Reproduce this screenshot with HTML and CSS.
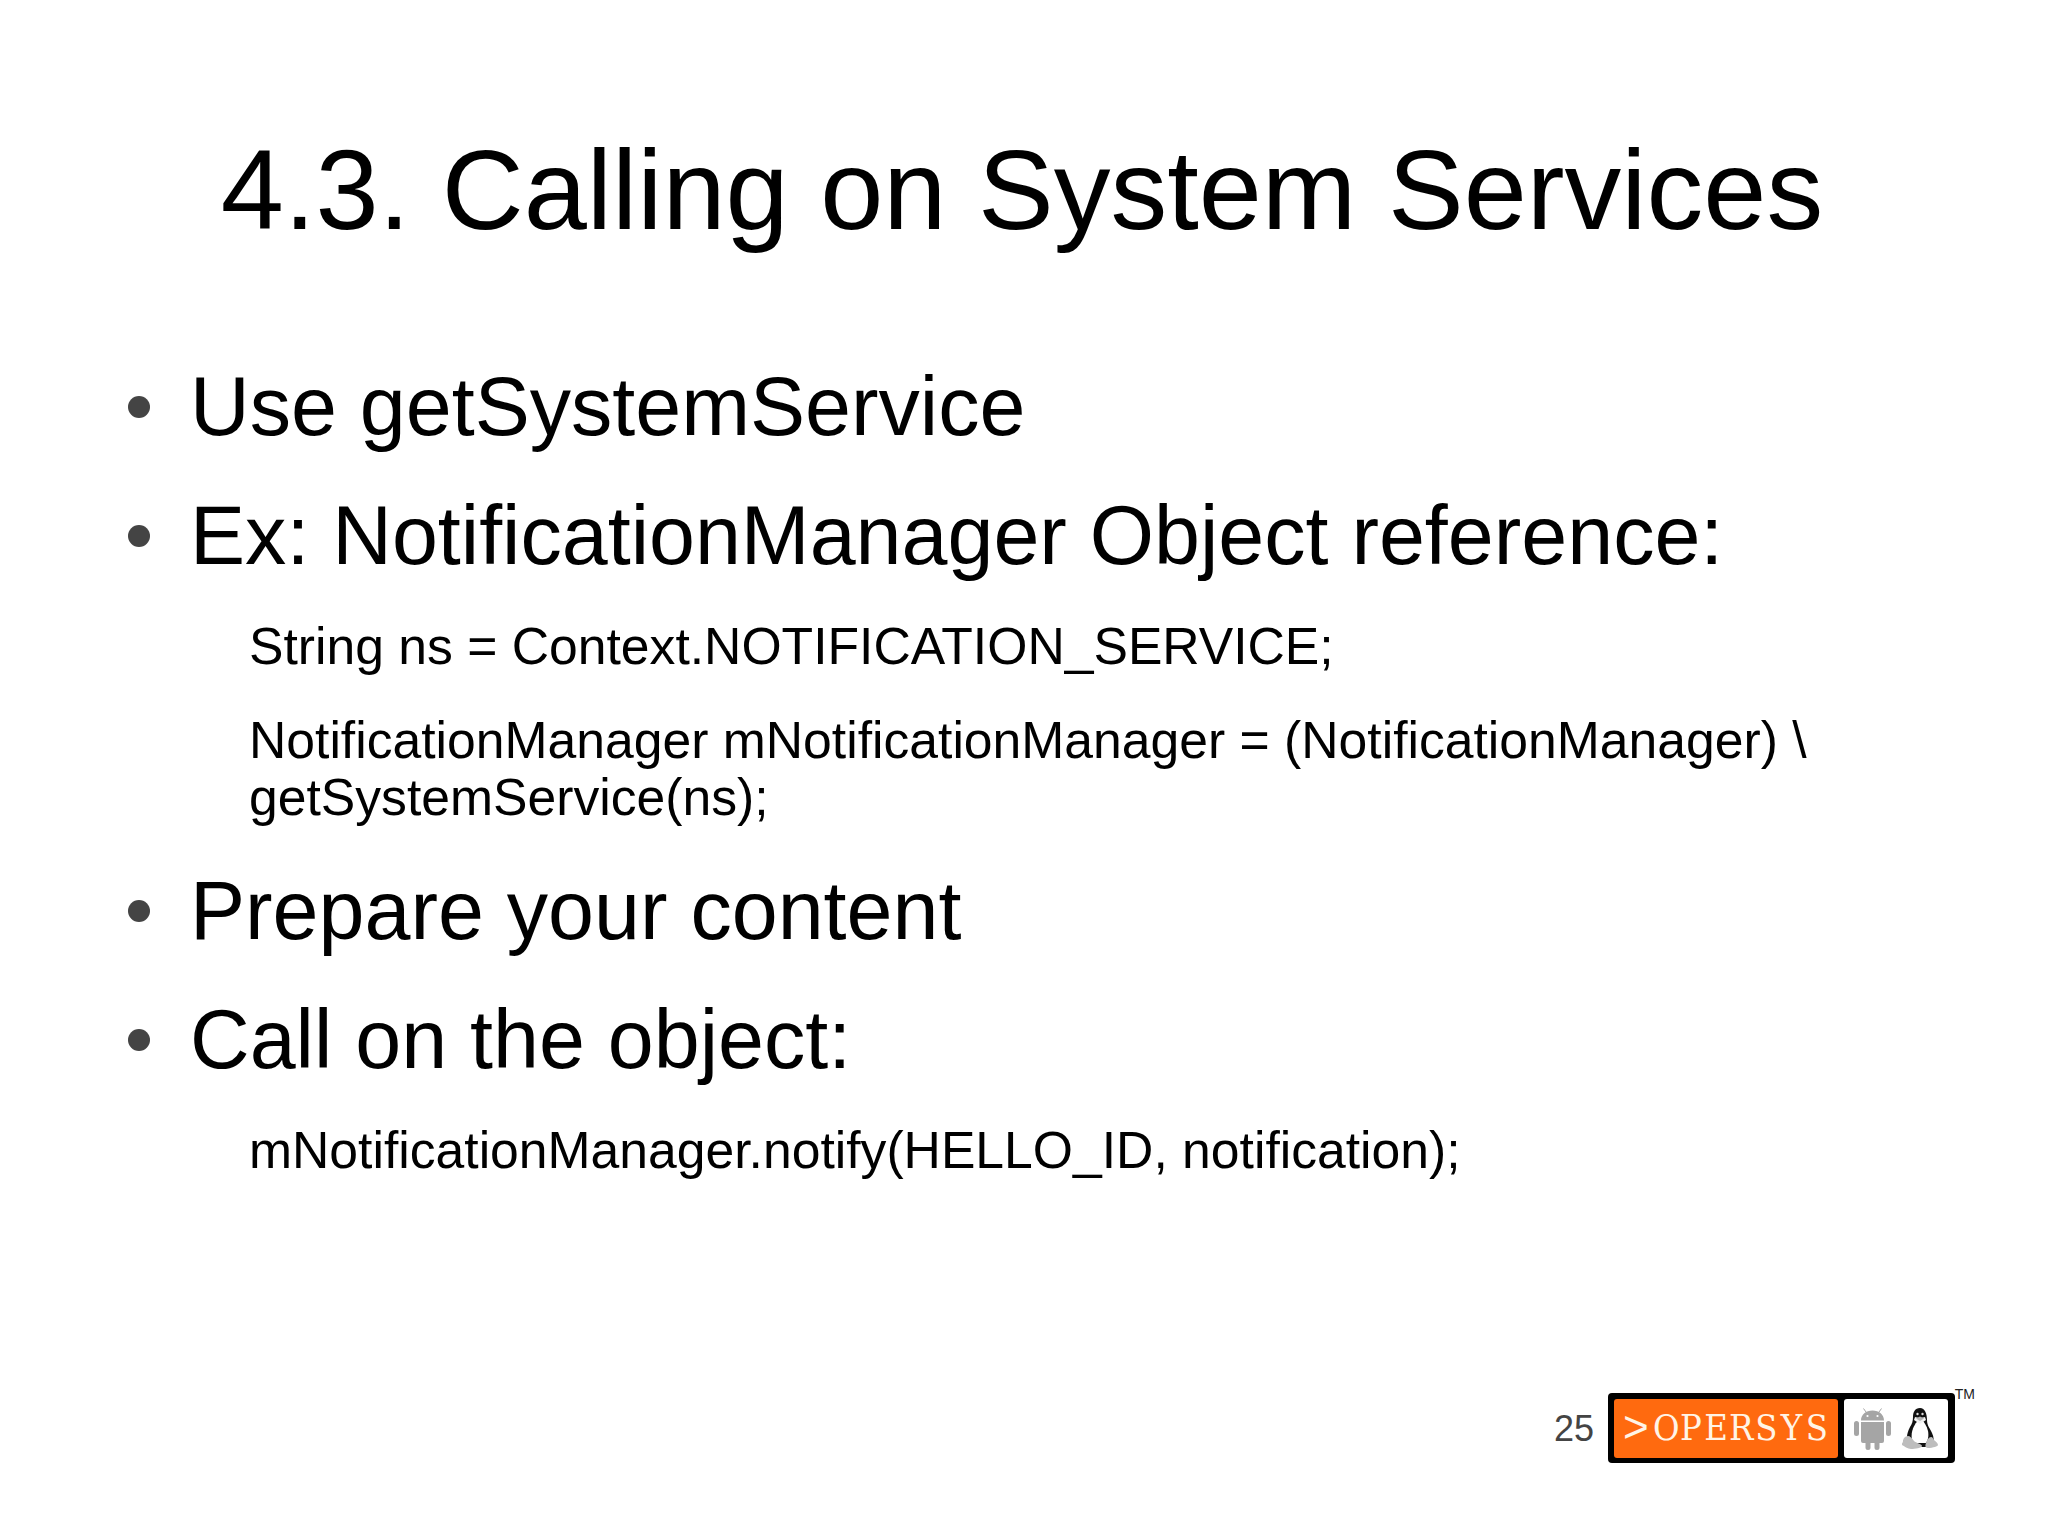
FILE: index.html
```html
<!DOCTYPE html>
<html lang="en">
<head>
<meta charset="utf-8">
<title>4.3. Calling on System Services</title>
<link rel="stylesheet" href="styles.css">
</head>
<body>
<main class="slide">
  <h1 class="title">4.3. Calling on System Services</h1>
  <ul class="points">
    <li class="point"><span class="dot"></span>Use getSystemService</li>
    <li class="point"><span class="dot"></span>Ex: NotificationManager Object reference:</li>
    <li class="code">String ns = Context.NOTIFICATION_SERVICE;</li>
    <li class="code code-wrap">NotificationManager mNotificationManager = (NotificationManager) \<br>getSystemService(ns);</li>
    <li class="point"><span class="dot"></span>Prepare your content</li>
    <li class="point"><span class="dot"></span>Call on the object:</li>
    <li class="code">mNotificationManager.notify(HELLO_ID, notification);</li>
  </ul>
  <footer class="foot">
    <span class="page">25</span>
    <div class="logo">
      <div class="brand"><span class="gt">&gt;</span><span class="ch">O</span><span class="ch">P</span><span class="ch">E</span><span class="ch">R</span><span class="ch">S</span><span class="ch">Y</span><span class="ch">S</span></div>
      <div class="mascots">
        <svg class="android" viewBox="0 0 37 42" width="37" height="42">
          <path fill="#a5a5a5" d="M7 12.500C7 6.500 12 2.500 18.500 2.500S30 6.500 30 12.500zM7 14h23v19a2 2 0 0 1-2 2h-2.500v4.500a2.500 2.500 0 0 1-5 0V35h-4v4.500a2.500 2.500 0 0 1-5 0V35H9a2 2 0 0 1-2-2zM0 15.500a2.500 2.500 0 0 1 5 0v10a2.500 2.500 0 0 1-5 0zM32 15.500a2.500 2.500 0 0 1 5 0v10a2.500 2.500 0 0 1-5 0z"/>
          <path stroke="#a5a5a5" stroke-width="1" d="M12 4 9.500 .5M25 4 27.500 .5"/>
          <circle cx="13.500" cy="8" r="1.100" fill="#fff"/><circle cx="23.500" cy="8" r="1.100" fill="#fff"/>
        </svg>
        <svg class="tux" viewBox="0 0 36 42" width="36" height="42">
          <path fill="#111" d="M18 0c-5 0-7 4-7 9 0 4-1 7-3 10-2 4-3 7-3 10l1 7h25c1-3 1-7-1-11-2-5-5-7-5-13 0-6-2-12-7-12z"/>
          <path fill="#fff" d="M17 12c-3 2-6 7-7 12-1 5 0 10 2 12h11c3-3 4-8 3-13-1-5-4-9-6-11z"/>
          <path fill="#f2f2f2" d="M13 9c2 1 8 1 10 0l1 3-6 4-6-4z"/>
          <path fill="#b5b5b5" d="M14 10.500l4-2 4 2-4 2.500z"/>
          <circle cx="15.500" cy="6" r="1.200" fill="#ddd"/><circle cx="20.500" cy="6" r="1.200" fill="#ddd"/>
          <path fill="#111" d="M12 35h13l1 4H12z"/>
          <path fill="#bdbdbd" d="M6 28c2 0 4 2 6 5 2 2 8 3 8 5 0 2-7 3-11 3-3 0-7-3-9-4-1-1 1-2 1-4s2-5 5-5zM29 29c2 0 2 2 3 3 2 2 4 3 4 5 0 1-5 3-10 3-3 0-3-2-2-5s3-6 5-6z"/>
        </svg>
      </div>
    </div>
    <span class="tm">TM</span>
  </footer>
</main>
</body>
</html>
```
FILE: styles.css
```css
* { box-sizing: border-box; }
html, body { margin: 0; padding: 0; background: #fff; }
.slide {
  width: 2048px;
  height: 1535px;
  padding: 131px 120px 0;
  display: flex;
  flex-direction: column;
  font-family: "Liberation Sans", Arial, sans-serif;
  color: #000;
}
.title {
  margin: 0 4px 0 0;
  font-weight: 400;
  font-size: 113.5px;
  line-height: 117px;
  text-align: center;
  height: 117px;
}
.points { list-style: none; margin: 113px 0 0; padding: 0; }
.point {
  display: flex;
  align-items: center;
  font-size: 82.6px;
  line-height: 92px;
  height: 92px;
  margin-bottom: 37px;
  white-space: nowrap;
}
.dot {
  width: 22px;
  height: 22px;
  border-radius: 50%;
  background: #444;
  margin: 0 40px 0 8px;
  flex: none;
}
.code {
  font-size: 51.67px;
  line-height: 57px;
  padding-left: 129px;
  margin-bottom: 37px;
  white-space: nowrap;
}
.point + .code { margin-top: -1px; }
.code-wrap { margin-bottom: 39px; }
.foot {
  margin-top: auto;
  margin-right: -27px;
  margin-bottom: 72px;
  display: flex;
  align-items: flex-start;
  position: relative;
  justify-content: flex-end;
  height: 70px;
}
.page {
  font-size: 36px;
  line-height: 72px;
  color: #444;
  margin-right: 14px;
}
.logo {
  width: 347px;
  height: 70px;
  background: #000;
  border-radius: 4px;
  padding: 6px 7px 5px 6px;
  display: flex;
  gap: 6px;
}
.brand {
  width: 224px;
  background: #ff6a0f;
  border-radius: 3px;
  color: #fff4e6;
  font-family: "DejaVu Serif Condensed", "DejaVu Serif", serif;
  font-size: 36px;
  line-height: 58px;
  display: flex;
  padding-left: 9px;
  white-space: nowrap;
  overflow: hidden;
}
.gt {
  width: 30px;
  font-family: "Liberation Sans", sans-serif;
  font-size: 44px;
  line-height: 56px;
}
.ch { width: 25.2px; text-align: center; }
.mascots {
  flex: 1;
  background: #fff;
  border-radius: 3px;
  display: flex;
  align-items: center;
  justify-content: space-between;
  padding: 0 10px;
}
.tm {
  position: absolute;
  right: -20px;
  top: -7px;
  font-size: 14px;
  line-height: 16px;
  color: #222;
}
```
